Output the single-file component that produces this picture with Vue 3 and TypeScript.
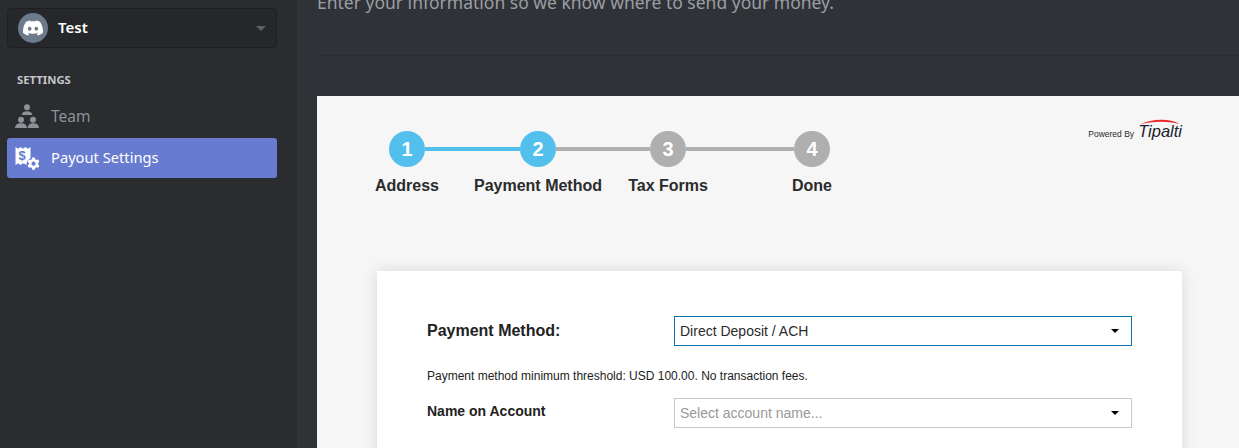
<script setup lang="ts">
interface Step { n: number; label: string; active: boolean; gap?: number; lineActive?: boolean }
const steps: Step[] = [
  { n: 1, label: 'Address', active: true, gap: 95, lineActive: true },
  { n: 2, label: 'Payment Method', active: true, gap: 94 },
  { n: 3, label: 'Tax Forms', active: false, gap: 108 },
  { n: 4, label: 'Done', active: false },
]
const columns = steps.map(s => (s.gap ? `36px ${s.gap}px` : '36px')).join(' ')
</script>

<template>
  <div class="page">
    <aside class="sidebar">
      <div class="guild">
        <span class="avatar">
          <svg viewBox="0 0 24 24" width="20" height="20"><path fill="#fff" d="M20.317 4.3698a19.7913 19.7913 0 00-4.8851-1.5152.0741.0741 0 00-.0785.0371c-.211.3753-.4447.8648-.6083 1.2495-1.8447-.2762-3.68-.2762-5.4868 0-.1636-.3933-.4058-.8742-.6177-1.2495a.077.077 0 00-.0785-.037 19.7363 19.7363 0 00-4.8852 1.515.0699.0699 0 00-.0321.0277C.5334 9.0458-.319 13.5799.0992 18.0578a.0824.0824 0 00.0312.0561c2.0528 1.5076 4.0413 2.4228 5.9929 3.0294a.0777.0777 0 00.0842-.0276c.4616-.6304.8731-1.2952 1.226-1.9942a.076.076 0 00-.0416-.1057c-.6528-.2476-1.2743-.5495-1.8722-.8923a.077.077 0 01-.0076-.1277c.1258-.0943.2517-.1923.3718-.2914a.0743.0743 0 01.0776-.0105c3.9278 1.7933 8.18 1.7933 12.0614 0a.0739.0739 0 01.0785.0095c.1202.099.246.1981.3728.2924a.077.077 0 01-.0066.1276 12.2986 12.2986 0 01-1.873.8914.0766.0766 0 00-.0407.1067c.3604.698.7719 1.3628 1.225 1.9932a.076.076 0 00.0842.0286c1.961-.6067 3.9495-1.5219 6.0023-3.0294a.077.077 0 00.0313-.0552c.5004-5.177-.8382-9.6739-3.5485-13.6604a.061.061 0 00-.0312-.0286zM8.02 15.3312c-1.1825 0-2.1569-1.0857-2.1569-2.419 0-1.3332.9555-2.4189 2.157-2.4189 1.2108 0 2.1757 1.0952 2.1568 2.419 0 1.3332-.9555 2.4189-2.1569 2.4189zm7.9748 0c-1.1825 0-2.1569-1.0857-2.1569-2.419 0-1.3332.9554-2.4189 2.1569-2.4189 1.2108 0 2.1757 1.0952 2.1568 2.419 0 1.3332-.946 2.4189-2.1568 2.4189Z"/></svg>
        </span>
        <span class="guild-name">Test</span>
        <span class="guild-caret"></span>
      </div>
      <div class="section-title">SETTINGS</div>
      <div class="nav-item team">
        <svg class="nav-icon" viewBox="0 0 24 24" width="24" height="24" fill="#8e9297">
          <circle cx="12" cy="3.300" r="3"/>
          <path d="M6.700 11c.3-2.700 2.700-3.700 5.300-3.700s5 1 5.300 3.700z"/>
          <circle cx="6" cy="15.800" r="3"/>
          <path d="M0 24c.3-3.400 2.900-4.800 6-4.800s5.700 1.400 6 4.800z"/>
          <circle cx="18" cy="15.800" r="3"/>
          <path d="M12.700 24c.3-3.400 2.500-4.800 5.600-4.800s5.400 1.400 5.700 4.800z"/>
        </svg>
        <span>Team</span>
      </div>
      <div class="nav-item selected">
        <svg class="nav-icon" viewBox="0 0 24 24" width="24" height="24">
          <path fill="#fff" d="M.5 1l2.600 1.700L5.500 1l2.500 1.700L10.500 1 13 2.700 15.500 1v11.200a6.500 6.500 0 0 0-3.800 6.600L8 17.300 5.500 19 3 17.300.5 19z"/>
          <text x="3.400" y="14" class="dollar">$</text>
          <path fill="#fff" fill-rule="evenodd" d="M17.200 11.500h2.600l.4 1.800 1.200.7 1.800-.6 1.300 2.200-1.400 1.300v1.400l1.400 1.300-1.300 2.200-1.800-.6-1.200.7-.4 1.800h-2.600l-.4-1.800-1.200-.7-1.800.6-1.300-2.200 1.400-1.300v-1.400l-1.400-1.300 1.300-2.200 1.800.6 1.200-.7zM18.500 15.600a2.100 2.100 0 1 0 0 4.200 2.100 2.100 0 0 0 0-4.200z"/>
        </svg>
        <span class="selected-text">Payout Settings</span>
      </div>
    </aside>

    <main class="main">
      <p class="intro">Enter your information so we know where to send your money.</p>
      <div class="rule"></div>
      <section class="panel">
        <div class="panel-top">
          <div class="stepper" :style="{ gridTemplateColumns: columns }">
            <template v-for="s in steps" :key="s.n">
              <div class="circle" :class="{ on: s.active }">{{ s.n }}</div>
              <div v-if="s.gap" class="line" :class="{ on: s.lineActive }"></div>
            </template>
            <div
              v-for="(s, i) in steps"
              :key="s.label"
              class="step-label"
              :style="{ gridColumn: i * 2 + 1 }"
            >{{ s.label }}</div>
          </div>
          <div class="powered">
            <span class="powered-by">Powered By</span>
            <span class="tipalti">
              <svg class="swoosh" viewBox="0 0 44 6" width="42" height="6"><path d="M2 5.500C14-.5 33-1.500 43.500 5 31 2 15 2 2 5.500z" fill="#e8262c"/></svg>
              Tipalti
            </span>
          </div>
        </div>

        <div class="card">
          <div class="row method">
            <label class="method-label">Payment Method:</label>
            <div class="select focus"><span>Direct Deposit / ACH</span><i class="arrow"></i></div>
          </div>
          <p class="note">Payment method minimum threshold: USD 100.00. No transaction fees.</p>
          <div class="row account">
            <label class="account-label">Name on Account</label>
            <div class="select"><span class="placeholder">Select account name...</span><i class="arrow"></i></div>
          </div>
        </div>
      </section>
    </main>
  </div>
</template>

<style>
html, body { margin: 0; height: 100%; overflow: hidden; background: #2f3136; }
</style>

<style scoped>
.page {
  display: flex;
  width: 1239px;
  height: 448px;
  overflow: hidden;
  font-family: "Noto Sans", sans-serif;
}
.sidebar {
  flex: 0 0 297px;
  box-sizing: border-box;
  padding: 8px 20px 0 7px;
  background: #2a2c30;
}
.guild {
  display: flex;
  align-items: center;
  box-sizing: border-box;
  height: 40px;
  padding: 0 10px;
  background: #26272b;
  border: 1px solid #1e1f23;
  border-radius: 4px;
}
.avatar {
  display: flex;
  align-items: center;
  justify-content: center;
  width: 30px;
  height: 30px;
  border-radius: 50%;
  background: #6c7a89;
}
.guild-name {
  margin-left: 10px;
  margin-top: -2px;
  flex: 1;
  font-size: 15px;
  font-weight: 600;
  color: #fff;
}
.guild-caret {
  width: 0;
  height: 0;
  border-left: 5px solid transparent;
  border-right: 5px solid transparent;
  border-top: 5px solid #5c5f64;
}
.section-title {
  margin: 24px 0 0 10px;
  height: 16px;
  line-height: 16px;
  font-size: 11.300px;
  font-weight: 700;
  color: #c4c6c9;
}
.nav-item {
  display: flex;
  align-items: center;
  height: 40px;
  padding-left: 8px;
  border-radius: 3px;
  font-size: 14.700px;
  color: #8e9297;
}
.nav-icon { flex: none; margin-right: 12px; }
.team { margin-top: 8px; font-size: 15.500px; }
.selected {
  margin-top: 2px;
  background: #677bd0;
  color: #fff;
}
.selected-text { margin-top: -2px; }
.dollar {
  font-family: "Liberation Sans", sans-serif;
  font-size: 13px;
  font-weight: 700;
  fill: #677bd0;
}
.main {
  flex: 1;
  min-width: 0;
  padding-left: 20px;
  background: #2f3237;
}
.intro {
  margin: -10px 0 0;
  height: 24px;
  line-height: 24px;
  font-size: 17.500px;
  white-space: nowrap;
  color: #9b9ea2;
}
.rule {
  margin-top: 41px;
  height: 1px;
  background: #2a2c31;
}
.panel {
  margin-top: 40px;
  height: 400px;
  background: #f6f6f6;
  font-family: "Liberation Sans", Arial, sans-serif;
}
.panel-top {
  display: flex;
  justify-content: space-between;
  height: 175px;
  padding: 35px 57px 0 72px;
  box-sizing: border-box;
}
.stepper {
  display: grid;
  grid-template-rows: 36px auto;
  align-items: center;
  align-content: start;
  row-gap: 10px;
}
.circle {
  width: 36px;
  height: 36px;
  border-radius: 50%;
  display: flex;
  align-items: center;
  justify-content: center;
  background: #afafaf;
  color: #fff;
  font-size: 20px;
  font-weight: 700;
}
.circle.on { background: #52bfec; }
.line { height: 4px; background: #afafaf; }
.line.on { background: #52bfec; }
.step-label {
  grid-row: 2;
  justify-self: center;
  white-space: nowrap;
  font-size: 16px;
  font-weight: 700;
  color: #2b2b2b;
}
.powered {
  display: flex;
  align-items: baseline;
  height: 20px;
  margin-top: -9px;
  color: #2a2a2a;
}
.powered-by { font-size: 8.500px; margin-right: 4px; }
.tipalti {
  position: relative;
  font-family: "Liberation Sans", sans-serif;
  font-style: italic;
  font-size: 16.500px;
  color: #1c2030;
}
.swoosh { position: absolute; left: 0; top: -3px; }
.card {
  box-sizing: border-box;
  width: 805px;
  height: 240px;
  margin-left: 60px;
  padding: 45px 50px 0;
  background: #fff;
  box-shadow: 0 0 14px rgba(0, 0, 0, 0.12);
}
.row {
  display: flex;
  align-items: center;
}
.method-label {
  width: 247px;
  font-size: 16px;
  font-weight: 700;
  color: #222;
}
.account-label {
  width: 247px;
  font-size: 14px;
  font-weight: 700;
  color: #222;
  align-self: flex-start;
  margin-top: 5px;
}
.select {
  box-sizing: border-box;
  display: flex;
  align-items: center;
  justify-content: space-between;
  width: 458px;
  height: 30px;
  padding: 0 12px 0 5px;
  border: 1px solid #c8c8c8;
  font-size: 14px;
  color: #2b2b2b;
  background: #fff;
}
.select.focus { border-color: #0a72ad; }
.placeholder { color: #999; }
.arrow {
  width: 0;
  height: 0;
  border-left: 4px solid transparent;
  border-right: 4px solid transparent;
  border-top: 4px solid #000;
}
.note {
  margin: 23px 0 0;
  height: 14px;
  line-height: 14px;
  font-size: 12px;
  color: #222;
}
.account { margin-top: 15px; }
</style>
